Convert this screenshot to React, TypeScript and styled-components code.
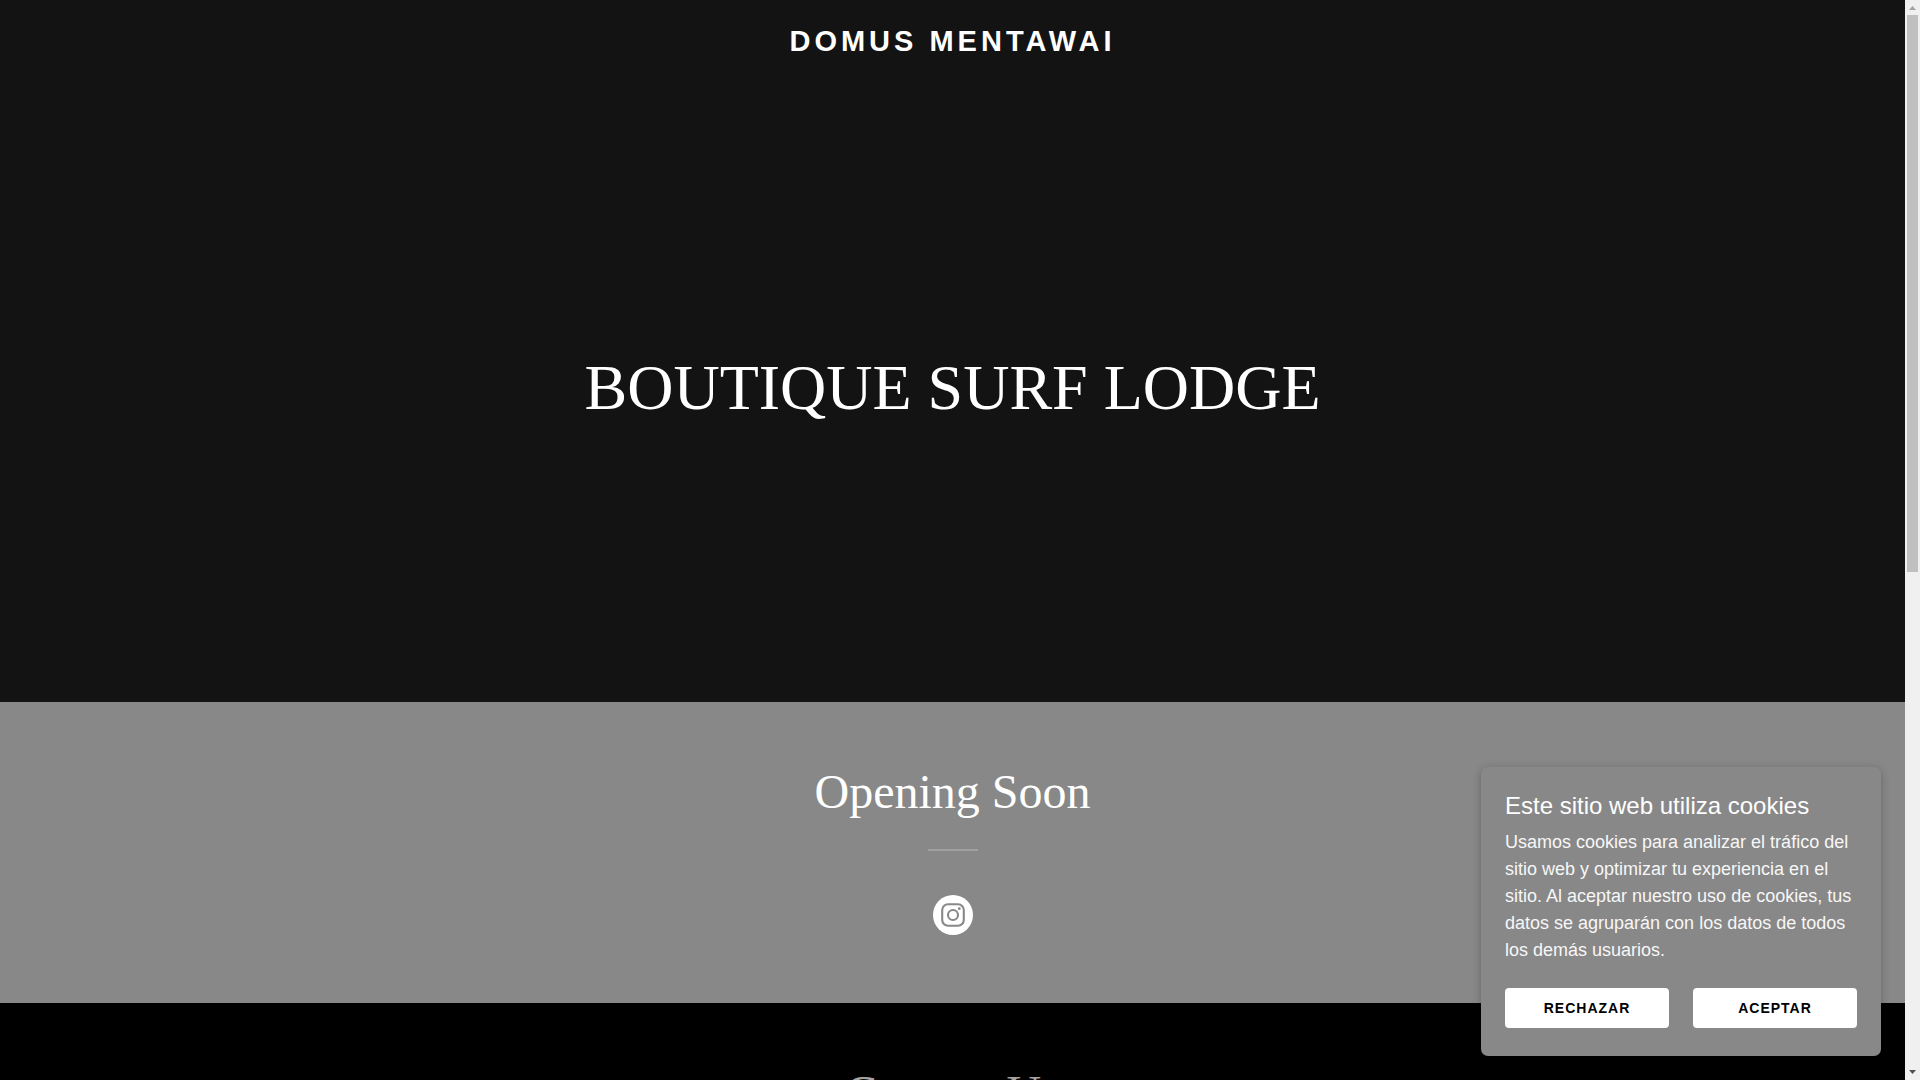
import React, { useState } from "react";
import styled, { createGlobalStyle } from "styled-components";

const sans = `"Liberation Sans", Arial, sans-serif`;
const serif = `"Liberation Serif", "Times New Roman", serif`;

const GlobalStyle = createGlobalStyle`
  *, *::before, *::after { box-sizing: border-box; }
  body { margin: 0; font-family: ${sans}; background: #000; }
  h1, h2, h3, p { margin: 0; font-weight: 400; }
`;

const Shell = styled.div`
  display: grid;
  grid-template-columns: minmax(0, 1fr) 15px;
  height: 100vh;
  overflow: hidden;
`;

const Page = styled.div`
  position: relative;
  min-height: 0;
  overflow: hidden;
`;

const Hero = styled.div`
  display: flex;
  flex-direction: column;
  min-height: 65vh;
  background: #131313;
  color: #fff;
`;

const Header = styled.header`
  display: flex;
  justify-content: center;
  padding: 24px 24px 16px;
`;

const Brand = styled.a`
  color: #fff;
  font-size: 29px;
  font-weight: 700;
  line-height: 34px;
  letter-spacing: 4px;
  text-decoration: none;
  text-transform: uppercase;
`;

const HeroBody = styled.div`
  flex: 1;
  display: flex;
  align-items: center;
  justify-content: center;
  padding: 0 24px;
`;

const HeroTitle = styled.h1`
  font-family: ${serif};
  font-size: 64px;
  line-height: 80px;
  text-align: center;
`;

const Section = styled.section<{ $tone: "grey" | "black" }>`
  display: flex;
  flex-direction: column;
  align-items: center;
  padding: 56px 24px 68px;
  background: ${(p) => (p.$tone === "grey" ? "#888" : "#000")};
  color: ${(p) => (p.$tone === "grey" ? "#fff" : "#a4a4a4")};
`;

const SectionTitle = styled.h2`
  font-family: ${serif};
  font-size: 48px;
  line-height: 67px;
  text-align: center;
`;

const Divider = styled.hr`
  width: 50px;
  height: 2px;
  margin: 24px 0 44px;
  border: 0;
  background: #a0a0a0;
`;

const SocialLink = styled.a`
  display: block;
  width: 40px;
  height: 40px;
  border-radius: 50%;
  background: #fff;
  color: #888;

  svg { display: block; }
`;

const CookieCard = styled.aside`
  position: absolute;
  right: 24px;
  bottom: 24px;
  width: 400px;
  max-width: calc(100% - 48px);
  padding: 24px 24px 28px;
  border-radius: 7px;
  background: #888;
  color: #fff;
  box-shadow: 0 2px 8px rgba(0, 0, 0, 0.25);
`;

const CookieTitle = styled.h3`
  font-size: 24px;
  line-height: 30px;
`;

const CookieText = styled.p`
  margin: 8px 0 24px;
  font-size: 18px;
  line-height: 27px;
  color: #f7f7f7;
`;

const CookieActions = styled.div`
  display: grid;
  grid-template-columns: 1fr 1fr;
  gap: 24px;
`;

const CookieButton = styled.button`
  height: 40px;
  padding: 0 8px;
  border: 0;
  border-radius: 4px;
  background: #fff;
  color: #000;
  font-family: ${sans};
  font-size: 14px;
  font-weight: 700;
  letter-spacing: 1px;
  text-transform: uppercase;
  cursor: pointer;
`;

const ScrollTrack = styled.div`
  display: grid;
  grid-template-rows: 15px minmax(0, 1fr) 15px;
  background: #f0f0f0;
`;

const ScrollArrow = styled.svg`
  display: block;
  width: 15px;
  height: 15px;
`;

const ScrollThumb = styled.div`
  height: 53%;
  margin: 0 2px;
  background: #c0c0c0;
`;

function InstagramIcon() {
  return (
    <svg width="40" height="40" viewBox="0 0 40 40" fill="none" stroke="currentColor" aria-hidden="true">
      <rect x="9.2" y="9.2" width="21.6" height="21.6" rx="5.8" strokeWidth="2.1" />
      <circle cx="20" cy="20" r="5" strokeWidth="2.1" />
      <circle cx="26.3" cy="13.7" r="1.4" fill="currentColor" stroke="none" />
    </svg>
  );
}

export default function App() {
  const [cookiesOpen, setCookiesOpen] = useState(true);
  const close = () => setCookiesOpen(false);

  return (
    <>
      <GlobalStyle />
      <Shell>
        <Page>
          <Hero>
            <Header>
              <Brand href="#">Domus Mentawai</Brand>
            </Header>
            <HeroBody>
              <HeroTitle>BOUTIQUE SURF LODGE</HeroTitle>
            </HeroBody>
          </Hero>
          <Section $tone="grey">
            <SectionTitle>Opening Soon</SectionTitle>
            <Divider />
            <SocialLink href="#" aria-label="Instagram">
              <InstagramIcon />
            </SocialLink>
          </Section>
          <Section $tone="black">
            <SectionTitle>Contact Us</SectionTitle>
          </Section>
          {cookiesOpen && (
            <CookieCard>
              <CookieTitle>Este sitio web utiliza cookies</CookieTitle>
              <CookieText>
                Usamos cookies para analizar el tráfico del sitio web y optimizar tu experiencia en el
                sitio. Al aceptar nuestro uso de cookies, tus datos se agruparán con los datos de todos
                los demás usuarios.
              </CookieText>
              <CookieActions>
                <CookieButton type="button" onClick={close}>Rechazar</CookieButton>
                <CookieButton type="button" onClick={close}>Aceptar</CookieButton>
              </CookieActions>
            </CookieCard>
          )}
        </Page>
        <ScrollTrack aria-hidden="true">
          <ScrollArrow viewBox="0 0 15 15">
            <path d="M4 10 L7.5 6 L11 10 Z" fill="#a3a3a3" />
          </ScrollArrow>
          <ScrollThumb />
          <ScrollArrow viewBox="0 0 15 15">
            <path d="M4 5 L11 5 L7.5 9 Z" fill="#505050" />
          </ScrollArrow>
        </ScrollTrack>
      </Shell>
    </>
  );
}
